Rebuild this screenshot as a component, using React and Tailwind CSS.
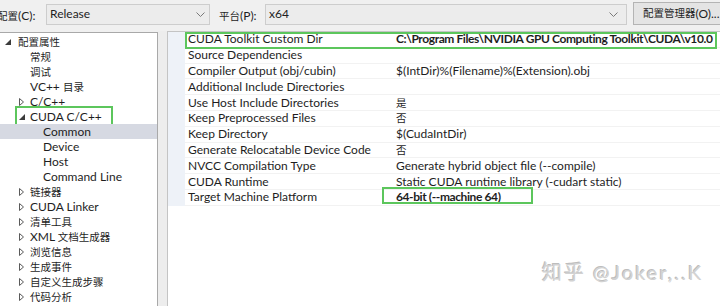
import React from 'react';

const FONT = "font-['Lato','Noto_Sans_CJK_SC',sans-serif]";

// YaHei in the original is narrower than our CJK fallback, so CJK runs get a smaller size
const T = ({ children }) => {
  const parts = String(children).split(/([\u3400-\u9fff]+)/);
  return (
    <>
      {parts.map((s, i) =>
        /[\u3400-\u9fff]/.test(s) ? (
          <span key={i} className="text-[10.5px]">{s}</span>
        ) : (
          <React.Fragment key={i}>{s}</React.Fragment>
        )
      )}
    </>
  );
};

// expanded / collapsed glyphs of the property tree
const Expanded = () => (
  <svg width="6" height="6" viewBox="0 0 6 6" className="shrink-0">
    <polygon points="6,0 6,6 0,6" fill="#3c3c3c" />
  </svg>
);

const Collapsed = () => (
  <svg width="5" height="8" viewBox="0 0 5 8" className="shrink-0">
    <polygon points="0.5,0.5 4.5,4 0.5,7.5" fill="none" stroke="#5a5a5a" strokeWidth="1" />
  </svg>
);

const Chevron = () => (
  <svg width="9" height="5" viewBox="0 0 9 5" className="shrink-0">
    <polyline points="0.5,0.5 4.5,4.5 8.5,0.5" fill="none" stroke="#7a7a7a" strokeWidth="1" />
  </svg>
);

const tree = [
  { label: '配置属性', icon: 'open', pad: 'pl-[5px]', gap: 'gap-[7px]' },
  { label: '常规', pad: 'pl-[30px]' },
  { label: '调试', pad: 'pl-[30px]' },
  { label: 'VC++ 目录', pad: 'pl-[30px]' },
  { label: 'C/C++', icon: 'closed', pad: 'pl-[19px]', gap: 'gap-[6px]' },
  { label: 'CUDA C/C++', icon: 'open', pad: 'pl-[19px]', gap: 'gap-[5px]', box: true },
  { label: 'Common', pad: 'pl-[43px]', selected: true },
  { label: 'Device', pad: 'pl-[43px]' },
  { label: 'Host', pad: 'pl-[43px]' },
  { label: 'Command Line', pad: 'pl-[43px]' },
  { label: '链接器', icon: 'closed', pad: 'pl-[19px]', gap: 'gap-[6px]' },
  { label: 'CUDA Linker', icon: 'closed', pad: 'pl-[19px]', gap: 'gap-[6px]' },
  { label: '清单工具', icon: 'closed', pad: 'pl-[19px]', gap: 'gap-[6px]' },
  { label: 'XML 文档生成器', icon: 'closed', pad: 'pl-[19px]', gap: 'gap-[6px]' },
  { label: '浏览信息', icon: 'closed', pad: 'pl-[19px]', gap: 'gap-[6px]' },
  { label: '生成事件', icon: 'closed', pad: 'pl-[19px]', gap: 'gap-[6px]' },
  { label: '自定义生成步骤', icon: 'closed', pad: 'pl-[19px]', gap: 'gap-[6px]' },
  { label: '代码分析', icon: 'closed', pad: 'pl-[19px]', gap: 'gap-[6px]' },
];

const props = [
  { name: 'CUDA Toolkit Custom Dir', value: 'C:\\Program Files\\NVIDIA GPU Computing Toolkit\\CUDA\\v10.0', bold: true, rowBox: true },
  { name: 'Source Dependencies', value: '' },
  { name: 'Compiler Output (obj/cubin)', value: '$(IntDir)%(Filename)%(Extension).obj' },
  { name: 'Additional Include Directories', value: '' },
  { name: 'Use Host Include Directories', value: '是' },
  { name: 'Keep Preprocessed Files', value: '否' },
  { name: 'Keep Directory', value: '$(CudaIntDir)' },
  { name: 'Generate Relocatable Device Code', value: '否' },
  { name: 'NVCC Compilation Type', value: 'Generate hybrid object file (--compile)' },
  { name: 'CUDA Runtime', value: 'Static CUDA runtime library (-cudart static)' },
  { name: 'Target Machine Platform', value: '64-bit (--machine 64)', bold: true, valueBox: true },
];

export default function App() {
  return (
    <div className={`relative w-[720px] h-[306px] overflow-hidden bg-[#f0f0f0] text-[12px] text-[#1e1e1e] ${FONT}`}>
      {/* toolbar */}
      <div className="flex items-center h-[31px]">
        <span className="ml-[-3px] w-[49px] shrink-0 whitespace-nowrap"><T>配置(C):</T></span>
        <div className="flex shrink-0 items-center justify-between w-[164px] h-[21px] mt-[-3px] px-[3px] pr-[4px] bg-[#ececec] border border-[#cdcdcd]">
          <span>Release</span>
          <Chevron />
        </div>
        <span className="ml-[9px] w-[46px] shrink-0 whitespace-nowrap"><T>平台(P):</T></span>
        <div className="flex shrink-0 items-center justify-between w-[362px] h-[21px] mt-[-3px] px-[3px] pr-[8px] bg-[#ececec] border border-[#cdcdcd]">
          <span>x64</span>
          <Chevron />
        </div>
        <div className="ml-[6px] flex items-center h-[23px] mt-[-4px] pl-[9px] w-[92px] shrink-0 bg-[#e4e4e4] border border-[#b4b4b4] whitespace-nowrap">
          <T>配置管理器(O)...</T>
        </div>
      </div>

      <div className="flex h-[275px]">
        {/* property tree */}
        <div className="w-[158px] shrink-0 mt-[1px] bg-white border-t border-r border-[#a9a9a9] pt-[1px]">
          {tree.map((t) => (
            <div
              key={t.label}
              className={`relative flex items-center h-[15px] ${t.pad} ${t.gap || ''} ${t.selected ? 'bg-[#d6d9e2]' : ''}`}
            >
              {t.icon === 'open' && <Expanded />}
              {t.icon === 'closed' && <Collapsed />}
              <span className="whitespace-nowrap leading-none"><T>{t.label}</T></span>
              {t.box && (
                <span className="absolute left-[15px] top-[-3px] w-[98px] h-[29px] border-2 border-[#5cc65c]" />
              )}
            </div>
          ))}
        </div>

        {/* splitter */}
        <div className="w-[9px] shrink-0 bg-[#ededed]" />

        {/* property grid */}
        <div className="flex-1 bg-white border-t border-l border-[#c4c4c4]">
          {props.map((p) => (
            <div key={p.name} className="relative flex h-[15.8px] items-center">
              <div className="w-[17px] h-full shrink-0 bg-[#eef2f8]" />
              <div className="flex flex-1 h-full items-center border-b border-[#f2f2f2]">
                <span className="w-[211px] shrink-0 pl-[3px] whitespace-nowrap leading-none">{p.name}</span>
                <span className={`relative whitespace-nowrap leading-none ${p.bold ? 'font-bold tracking-[-0.4px]' : ''}`}>
                  <T>{p.value}</T>
                  {p.valueBox && (
                    <span className="absolute left-[-14px] top-[-4px] w-[151px] h-[17px] border-2 border-[#5cc65c]" />
                  )}
                </span>
              </div>
              {p.rowBox && (
                <span className="absolute left-[17px] top-[0px] right-[3px] h-[17px] border-2 border-[#5cc65c]" />
              )}
            </div>
          ))}
        </div>
      </div>

      {/* watermark */}
      <div className="absolute left-[542px] top-[257px] text-[20px] tracking-[2px] text-[#d2d2d2] [text-shadow:1px_1px_0_#ffffff,-1px_-1px_0_#bdbdbd] whitespace-nowrap">
        知乎 @Joker,..K
      </div>
    </div>
  );
}
